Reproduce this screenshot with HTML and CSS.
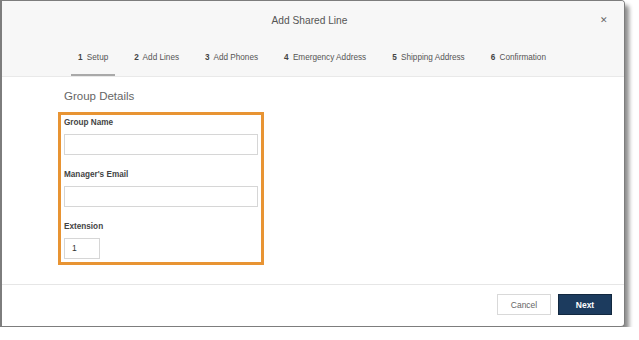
FILE: index.html
```html
<!DOCTYPE html>
<html>
<head>
<meta charset="utf-8">
<link rel="stylesheet" href="styles.css">
</head>
<body>
<div class="dialog">
  <div class="header">
    <div class="title-row">
      <span class="title">Add Shared Line</span>
      <span class="close">&#x2715;</span>
    </div>
    <div class="tabs">
      <div class="tab active"><b>1</b> Setup</div>
      <div class="tab"><b>2</b> Add Lines</div>
      <div class="tab"><b>3</b> Add Phones</div>
      <div class="tab"><b>4</b> Emergency Address</div>
      <div class="tab"><b>5</b> Shipping Address</div>
      <div class="tab"><b>6</b> Confirmation</div>
    </div>
  </div>
  <div class="body">
    <div class="section-title">Group Details</div>
    <div class="highlight">
      <div class="label">Group Name</div>
      <div class="input wide"></div>
      <div class="label">Manager's Email</div>
      <div class="input wide"></div>
      <div class="label">Extension</div>
      <div class="input small">1</div>
    </div>
  </div>
  <div class="footer">
    <div class="btn cancel">Cancel</div>
    <div class="btn next">Next</div>
  </div>
</div>
</body>
</html>
```
FILE: styles.css
```css
html, body {
  margin: 0;
  padding: 0;
  background: #ffffff;
}
body {
  font-family: "Liberation Sans", Arial, sans-serif;
  color: #444;
}
.dialog {
  box-sizing: border-box;
  width: 625px;
  height: 327px;
  border: 1px solid #7d7d7d;
  border-left-width: 2px;
  border-radius: 0 4px 4px 0;
  background: #fff;
  box-shadow: 4px 5px 4px rgba(0,0,0,0.45);
  display: flex;
  flex-direction: column;
  overflow: hidden;
}
.header {
  background: #f7f7f7;
  border-bottom: 1px solid #e9e9e9;
  height: 76px;
  box-sizing: border-box;
}
.title-row {
  height: 39px;
  display: flex;
  align-items: center;
  justify-content: center;
  position: relative;
}
.title {
  font-size: 10.2px;
  color: #555;
  margin-right: 7px;
}
.close {
  position: absolute;
  right: 16px;
  top: 14px;
  font-size: 8.5px;
  color: #666;
}
.tabs {
  display: flex;
  padding-left: 69px;
  gap: 12px;
  height: 36px;
}
.tab {
  font-size: 8.2px;
  color: #555;
  padding: 13px 7px 0;
  box-sizing: border-box;
  height: 36px;
  white-space: nowrap;
}
.tab b {
  color: #444;
  margin-right: 2px;
}
.tab.active {
  border-bottom: 2px solid #a9a9a9;
}
.body {
  flex: 1;
  padding: 13px 0 0 56px;
  border-bottom: 1px solid #e6e6e6;
}
.section-title {
  font-size: 11.5px;
  color: #666;
  margin-left: 6px;
  height: 22px;
}
.highlight {
  box-sizing: border-box;
  width: 206px;
  height: 153px;
  border: 3px solid #e89433;
  padding: 0 3px;
}
.label {
  font-size: 8.2px;
  font-weight: bold;
  color: #444;
  height: 19px;
  line-height: 16px;
}
.input {
  box-sizing: border-box;
  border: 1px solid #d6d6d6;
  height: 21px;
  margin-bottom: 12px;
  font-size: 8.5px;
  color: #333;
  line-height: 19px;
  padding-left: 7px;
}
.input.wide { width: 194px; }
.input.small { width: 36px; margin-bottom: 0; }
.footer {
  height: 41px;
  display: flex;
  justify-content: flex-end;
  gap: 7px;
  padding: 9px 12px 0 0;
  box-sizing: border-box;
}
.btn {
  box-sizing: border-box;
  width: 54px;
  height: 21px;
  font-size: 8.5px;
  display: flex;
  align-items: center;
  justify-content: center;
}
.cancel {
  border: 1px solid #d9d9d9;
  color: #666;
  background: #fff;
}
.next {
  background: #1c3b5e;
  border: 1px solid #12283f;
  color: #fff;
  font-weight: bold;
}
```
